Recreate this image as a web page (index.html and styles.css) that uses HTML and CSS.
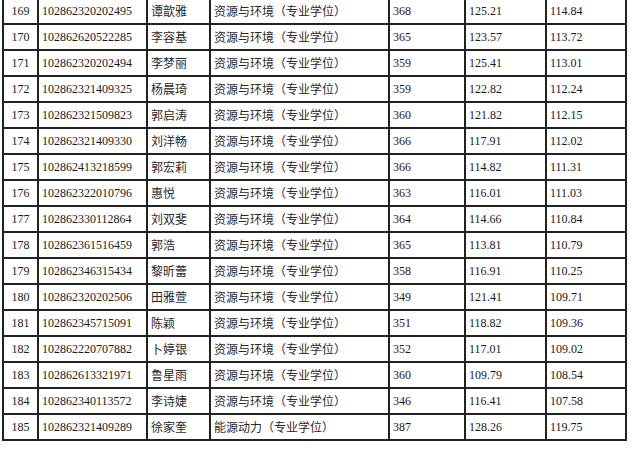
FILE: index.html
```html
<!DOCTYPE html>
<html lang="zh-CN">
<head>
<meta charset="utf-8">
<title>录取名单</title>
<link rel="stylesheet" href="styles.css">
</head>
<body>
<table class="grid">
  <colgroup>
    <col class="c-no"><col class="c-id"><col class="c-name"><col class="c-major"><col class="c-score"><col class="c-a"><col class="c-b">
  </colgroup>
  <tbody>
    <tr><td class="no">169</td><td>102862320202495</td><td class="cjk">谭歆雅</td><td class="cjk">资源与环境（专业学位）</td><td>368</td><td>125.21</td><td>114.84</td></tr>
    <tr><td class="no">170</td><td>102862620522285</td><td class="cjk">李容基</td><td class="cjk">资源与环境（专业学位）</td><td>365</td><td>123.57</td><td>113.72</td></tr>
    <tr><td class="no">171</td><td>102862320202494</td><td class="cjk">李梦丽</td><td class="cjk">资源与环境（专业学位）</td><td>359</td><td>125.41</td><td>113.01</td></tr>
    <tr><td class="no">172</td><td>102862321409325</td><td class="cjk">杨晨琦</td><td class="cjk">资源与环境（专业学位）</td><td>359</td><td>122.82</td><td>112.24</td></tr>
    <tr><td class="no">173</td><td>102862321509823</td><td class="cjk">郭启涛</td><td class="cjk">资源与环境（专业学位）</td><td>360</td><td>121.82</td><td>112.15</td></tr>
    <tr><td class="no">174</td><td>102862321409330</td><td class="cjk">刘洋畅</td><td class="cjk">资源与环境（专业学位）</td><td>366</td><td>117.91</td><td>112.02</td></tr>
    <tr><td class="no">175</td><td>102862413218599</td><td class="cjk">郭宏莉</td><td class="cjk">资源与环境（专业学位）</td><td>366</td><td>114.82</td><td>111.31</td></tr>
    <tr><td class="no">176</td><td>102862322010796</td><td class="cjk">惠悦</td><td class="cjk">资源与环境（专业学位）</td><td>363</td><td>116.01</td><td>111.03</td></tr>
    <tr><td class="no">177</td><td>102862330112864</td><td class="cjk">刘双斐</td><td class="cjk">资源与环境（专业学位）</td><td>364</td><td>114.66</td><td>110.84</td></tr>
    <tr><td class="no">178</td><td>102862361516459</td><td class="cjk">郭浩</td><td class="cjk">资源与环境（专业学位）</td><td>365</td><td>113.81</td><td>110.79</td></tr>
    <tr><td class="no">179</td><td>102862346315434</td><td class="cjk">黎昕蕾</td><td class="cjk">资源与环境（专业学位）</td><td>358</td><td>116.91</td><td>110.25</td></tr>
    <tr><td class="no">180</td><td>102862320202506</td><td class="cjk">田雅萱</td><td class="cjk">资源与环境（专业学位）</td><td>349</td><td>121.41</td><td>109.71</td></tr>
    <tr><td class="no">181</td><td>102862345715091</td><td class="cjk">陈颖</td><td class="cjk">资源与环境（专业学位）</td><td>351</td><td>118.82</td><td>109.36</td></tr>
    <tr><td class="no">182</td><td>102862220707882</td><td class="cjk">卜婷银</td><td class="cjk">资源与环境（专业学位）</td><td>352</td><td>117.01</td><td>109.02</td></tr>
    <tr><td class="no">183</td><td>102862613321971</td><td class="cjk">鲁星雨</td><td class="cjk">资源与环境（专业学位）</td><td>360</td><td>109.79</td><td>108.54</td></tr>
    <tr><td class="no">184</td><td>102862340113572</td><td class="cjk">李诗婕</td><td class="cjk">资源与环境（专业学位）</td><td>346</td><td>116.41</td><td>107.58</td></tr>
    <tr><td class="no">185</td><td>102862321409289</td><td class="cjk">徐家奎</td><td class="cjk">能源动力（专业学位）</td><td>387</td><td>128.26</td><td>119.75</td></tr>
  </tbody>
</table>
</body>
</html>
```

FILE: styles.css
```css
html, body {
  margin: 0;
  padding: 0;
  background: #ffffff;
}

body {
  font-family: "Liberation Serif", "Noto Sans CJK SC", serif;
  font-size: 12px;
  color: #1a1a1a;
}

.grid {
  border-collapse: collapse;
  table-layout: fixed;
  width: 625px;
  margin: -3px 0 0 2px;
}

.c-no { width: 35px; }
.c-id { width: 109px; }
.c-name { width: 63px; }
.c-major { width: 179px; }
.c-score { width: 76px; }
.c-a { width: 81px; }
.c-b { width: 80px; }

.grid tr {
  height: 26px;
}

.grid td {
  border: 2px solid #222222;
  padding: 0 0 0 3px;
  text-align: left;
  vertical-align: middle;
  white-space: nowrap;
  overflow: hidden;
  line-height: 14px;
}

.grid td.no {
  text-align: center;
  padding: 0;
}

.grid td.cjk {
  font-family: "Noto Sans CJK SC", sans-serif;
  color: #2a2a2a;
}
```
